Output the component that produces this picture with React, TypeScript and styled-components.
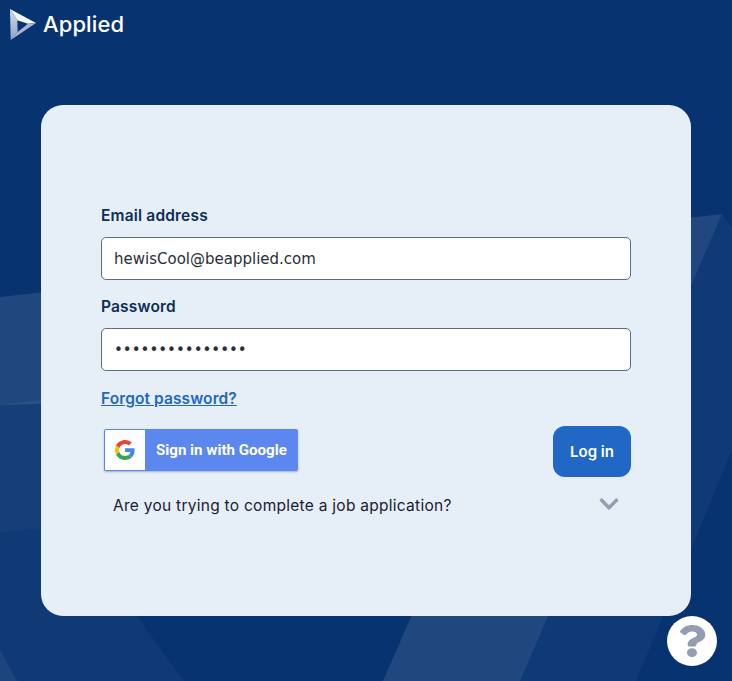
import React from "react";
import styled, { createGlobalStyle } from "styled-components";
import { FaChevronDown, FaQuestion } from "react-icons/fa";

const Global = createGlobalStyle`
  html, body { margin: 0; padding: 0; background: #083371; }
  * { box-sizing: border-box; }
`;

const Page = styled.div`
  position: relative;
  height: 681px;
  overflow: hidden;
  background: #083371;
  font-family: Inter, "Open Sans", sans-serif;
`;

const Backdrop = styled.svg`
  position: absolute;
  inset: 0;
`;

const Content = styled.div`
  position: relative;
  display: flex;
  flex-direction: column;
`;

const Header = styled.header`
  display: flex;
  align-items: center;
  gap: 5px;
  height: 50px;
  padding-left: 10px;
`;

const LogoText = styled.span`
  font-size: 22px;
  font-weight: 500;
  color: #ffffff;
  line-height: 1;
  margin-top: -3px;
  letter-spacing: 0.1px;
`;

const Card = styled.main`
  margin: 55px 41px 0;
  height: 511px;
  padding: 100px 60px 0;
  border-radius: 22px;
  background: rgba(231, 239, 249, 0.995);
`;

const Label = styled.label`
  display: block;
  height: 22px;
  line-height: 22px;
  font-size: 15.5px;
  font-weight: 600;
  letter-spacing: 0.18px;
  color: #0c2f52;
  margin-bottom: 10px;
`;

const Input = styled.input`
  display: block;
  width: 100%;
  height: 43px;
  padding: 0 12px;
  margin-bottom: 16px;
  border: 1px solid #5f6b8c;
  border-radius: 5px;
  background: #ffffff;
  outline: none;
  font-family: "DejaVu Sans", sans-serif;
  font-size: 15px;
  color: #2a2e38;
`;

const ForgotLink = styled.a`
  display: block;
  margin-top: 17px;
  height: 22px;
  line-height: 22px;
  font-size: 15.5px;
  font-weight: 600;
  letter-spacing: 0.1px;
  color: #2067c6;
  text-decoration: underline;
`;

const Actions = styled.div`
  display: flex;
  justify-content: space-between;
  align-items: flex-start;
  margin-top: 16px;
`;

const GoogleButton = styled.button`
  display: flex;
  align-items: stretch;
  width: 194px;
  height: 42px;
  margin: 3px 0 0 3px;
  padding: 1px;
  border: 0;
  border-radius: 2px;
  background: #5b87ee;
  box-shadow: 0 1px 2px rgba(40, 60, 100, 0.35);
`;

const GoogleMark = styled.span`
  display: flex;
  align-items: center;
  justify-content: center;
  width: 40px;
  background: #ffffff;
  border-radius: 1px 0 0 1px;
`;

const GoogleLabel = styled.span`
  flex: 1;
  padding-left: 11px;
  line-height: 40px;
  text-align: left;
  font-family: Roboto, sans-serif;
  font-size: 15.1px;
  font-weight: 700;
  color: #ffffff;
`;

const LoginButton = styled.button`
  width: 78px;
  height: 51px;
  border: 0;
  border-radius: 12px;
  background: #2067c6;
  font-family: inherit;
  font-size: 15px;
  font-weight: 600;
  color: #ffffff;
`;

const Disclosure = styled.div`
  display: flex;
  align-items: center;
  justify-content: space-between;
  height: 30px;
  margin-top: 13px;
  padding: 0 11px 0 12px;
  font-size: 15.5px;
  letter-spacing: 0.27px;
  color: #1a2030;
`;

const Chevron = styled(FaChevronDown)`
  width: 22px;
  height: 22px;
  margin-top: -2px;
  color: #969fb2;
`;

const HelpButton = styled.button`
  position: absolute;
  left: 667px;
  top: 616px;
  display: flex;
  align-items: center;
  justify-content: center;
  width: 50px;
  height: 50px;
  padding: 0;
  border: 0;
  border-radius: 50%;
  background: #ffffff;
  color: #959db3;
`;

const HelpIcon = styled(FaQuestion)`
  width: 32px;
  height: 32px;
  transform: scaleX(1.15);
`;

const Logo = () => (
  <svg width="28" height="32" viewBox="10 10 28 32">
    <defs>
      <linearGradient id="logoLeft" x1="0" y1="0" x2="0" y2="1">
        <stop offset="0" stopColor="#d3dcea" />
        <stop offset="1" stopColor="#8ea3c3" />
      </linearGradient>
    </defs>
    <polygon points="10,10 36,24 28,24.7 17.3,21.3" fill="#f4f7fb" />
    <polygon points="10,10 17.3,21.3 17.6,33 10.7,41" fill="url(#logoLeft)" />
    <polygon points="10.7,41 17.6,33 28,24.7 36,24" fill="#a6b6d0" />
  </svg>
);

const GoogleG = () => (
  <svg width="20" height="20" viewBox="0 0 48 48">
    <path fill="#EA4335" d="M24 9.5c3.54 0 6.71 1.22 9.21 3.6l6.85-6.85C35.9 2.38 30.47 0 24 0 14.62 0 6.51 5.38 2.56 13.22l7.98 6.19C12.43 13.72 17.74 9.5 24 9.5z" />
    <path fill="#4285F4" d="M46.98 24.55c0-1.57-.15-3.09-.38-4.55H24v9.02h12.94c-.58 2.96-2.26 5.48-4.78 7.18l7.73 6c4.51-4.18 7.09-10.36 7.09-17.65z" />
    <path fill="#FBBC05" d="M10.53 28.59c-.48-1.45-.76-2.99-.76-4.59s.27-3.14.76-4.59l-7.98-6.19C.92 16.46 0 20.12 0 24c0 3.88.92 7.54 2.56 10.78l7.97-6.19z" />
    <path fill="#34A853" d="M24 48c6.48 0 11.93-2.13 15.89-5.81l-7.73-6c-2.15 1.45-4.92 2.3-8.16 2.3-6.26 0-11.57-4.22-13.47-9.91l-7.98 6.19C6.51 42.62 14.62 48 24 48z" />
  </svg>
);

export default function App() {
  return (
    <Page>
      <Global />
      <Backdrop width="732" height="681" viewBox="0 0 732 681">
        <polygon points="0,533 70,525 184,681 0,681" fill="#ffffff" fillOpacity="0.035" />
        <polygon points="0,650 17,681 0,681" fill="#ffffff" fillOpacity="0.05" />
        <polygon points="0,405 70,397 70,525 0,533" fill="#ffffff" fillOpacity="0.06" />
        <polygon points="0,297 722,214 520,681 383,681 510,390 0,405" fill="#ffffff" fillOpacity="0.1" />
        <polygon points="722,214 732,228 732,450 636,681 520,681" fill="#ffffff" fillOpacity="0.035" />
      </Backdrop>
      <Content>
        <Header>
          <Logo />
          <LogoText>Applied</LogoText>
        </Header>
        <Card>
          <Label htmlFor="email">Email address</Label>
          <Input id="email" type="email" readOnly value="hewisCool@beapplied.com" />
          <Label htmlFor="password">Password</Label>
          <Input id="password" type="password" readOnly value="hewisCool123456" />
          <ForgotLink href="#">Forgot password?</ForgotLink>
          <Actions>
            <GoogleButton type="button">
              <GoogleMark><GoogleG /></GoogleMark>
              <GoogleLabel>Sign in with Google</GoogleLabel>
            </GoogleButton>
            <LoginButton type="button">Log in</LoginButton>
          </Actions>
          <Disclosure>
            <span>Are you trying to complete a job application?</span>
            <Chevron />
          </Disclosure>
        </Card>
      </Content>
      <HelpButton type="button" aria-label="Help"><HelpIcon /></HelpButton>
    </Page>
  );
}
